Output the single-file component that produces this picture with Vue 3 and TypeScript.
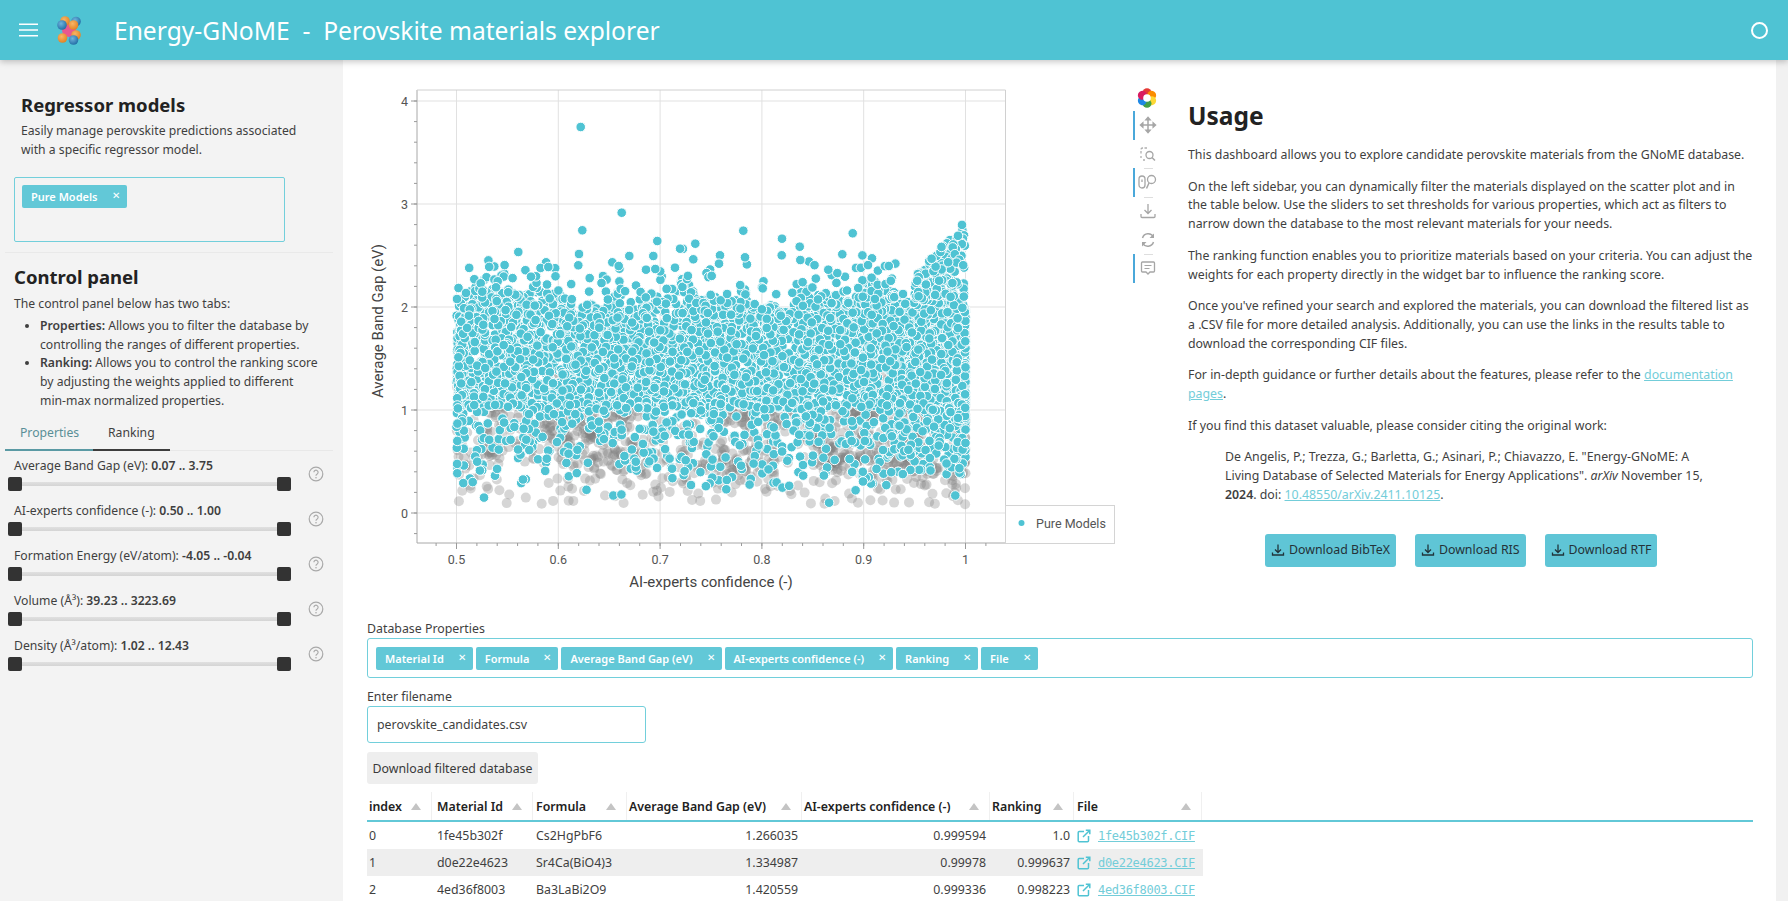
<script setup lang="ts">
import { computed } from "vue";

type Pt = { x: number; y: number };

let seed = 20241115;
function rnd(): number {
  seed = (seed * 1664525 + 1013904223) >>> 0;
  return seed / 4294967296;
}
function gauss(): number {
  return (rnd() + rnd() + rnd() + rnd() - 2) * 1.0;
}
const X0 = 456.5;
const XK = 1018;
const Y0 = 513;
const YK = 103;
const toX = (v: number) => +(X0 + (v - 0.5) * XK - 367).toFixed(1);
const toY = (v: number) => +(Y0 - v * YK - 80).toFixed(1);

function confidence(): number {
  const u = rnd();
  if (rnd() < 0.16) return 1 - Math.pow(u, 2.2) * 0.1;
  if (rnd() < 0.03) return 0.5 + u * 0.008;
  return 0.5 + 0.5 * Math.pow(u, 0.97);
}
function topEdge(c: number): number {
  return 2.1 + 0.07 * Math.sin(c * 37) + 0.07 * Math.sin(c * 97 + 1) + 0.05 * Math.sin(c * 211);
}

const grayPts = computed<Pt[]>(() => {
  const out: Pt[] = [];
  for (let i = 0; i < 800; i++) {
    const y = 0.8 + gauss() * 0.55;
    if (y < 0.08 || y > 1.6) continue;
    out.push({ x: toX(confidence()), y: toY(y) });
  }
  // dark clusters seen through gaps
  for (let i = 0; i < 40; i++) {
    const cx = 0.52 + rnd() * 0.46;
    const cy = 0.4 + rnd() * 0.75;
    for (let k = 0; k < 10; k++) {
      out.push({ x: toX(cx + (rnd() - 0.5) * 0.024), y: toY(cy + (rnd() - 0.5) * 0.2) });
    }
  }
  for (let i = 0; i < 60; i++) {
    out.push({ x: toX(0.505 + rnd() * 0.495), y: toY(0.08 + rnd() * 0.45) });
  }
  return out;
});

const tealPts = computed<Pt[]>(() => {
  const out: Pt[] = [];
  for (let i = 0; i < 4400; i++) {
    const c = confidence();
    const t = topEdge(c);
    const y = 1.02 + Math.pow(rnd(), 1.05) * (t - 1.02);
    out.push({ x: toX(c), y: toY(y) });
  }
  for (let i = 0; i < 640; i++) {
    const y = 0.22 + Math.pow(rnd(), 0.6) * 0.85;
    out.push({ x: toX(confidence()), y: toY(y) });
  }
  for (let i = 0; i < 120; i++) {
    const c = 0.5 + rnd() * 0.5;
    out.push({ x: toX(c), y: toY(topEdge(c) + Math.pow(rnd(), 1.4) * 0.3) });
  }
  for (let i = 0; i < 130; i++) {
    const t = rnd();
    out.push({ x: toX(0.95 + 0.05 * t), y: toY(2.05 + rnd() * (0.25 + t * 0.55)) });
  }
  const fixed = [
    [662, 141], [785, 398], [667, 451], [475, 516], [657, 522], [655, 556], [757, 547], [776, 558],
    [808, 528], [1150, 452], [1155, 532], [1266, 476], [1265, 526], [1319, 500], [1321, 540],
    [1478, 460], [1447, 523], [1006, 491], [892, 483], [880, 528], [1000, 538], [1080, 526],
    [1077, 551], [858, 569], [886, 567], [945, 563], [565, 561], [513, 590], [362, 610], [413, 604],
    [408, 622], [367, 635], [318, 639], [291, 657],
  ];
  for (const [a, b] of fixed) out.push({ x: +(360 + a / 3 - 367).toFixed(1), y: +(80 + b / 3 - 80).toFixed(1) });
  const low = [[0.527, 0.15], [0.654, 0.17], [0.662, 0.18], [0.866, 0.1], [0.99, 0.17], [0.892, 0.22], [0.745, 0.26], [0.765, 0.23]];
  for (const [a, b] of low) out.push({ x: toX(a), y: toY(b) });
  return out;
});

const xTicks = [0.5, 0.6, 0.7, 0.8, 0.9, 1];
const yTicks = [0, 1, 2, 3, 4];
const xMinor = computed<number[]>(() => {
  const r: number[] = [];
  for (let i = 0; i < 30; i++) r.push(toX(0.46 + i * 0.02));
  return r.filter((v) => v > 50 && v < 638);
});
const yMinor = computed<number[]>(() => {
  const r: number[] = [];
  for (let i = -1; i < 21; i++) r.push(toY(i * 0.2));
  return r.filter((v) => v > 10 && v < 462);
});

const regressorTags = ["Pure Models"];
const sliders = [
  { label: "Average Band Gap (eV):", value: "0.07 .. 3.75" },
  { label: "AI-experts confidence (-):", value: "0.50 .. 1.00" },
  { label: "Formation Energy (eV/atom):", value: "-4.05 .. -0.04" },
  { label: "Volume (Å³):", value: "39.23 .. 3223.69" },
  { label: "Density (Å³/atom):", value: "1.02 .. 12.43" },
];
const propTags = ["Material Id", "Formula", "Average Band Gap (eV)", "AI-experts confidence (-)", "Ranking", "File"];
const columns = [
  { name: "index", cls: "c0" },
  { name: "Material Id", cls: "c1" },
  { name: "Formula", cls: "c2" },
  { name: "Average Band Gap (eV)", cls: "c3" },
  { name: "AI-experts confidence (-)", cls: "c4" },
  { name: "Ranking", cls: "c5" },
  { name: "File", cls: "c6" },
];
const rows = [
  { i: 0, id: "1fe45b302f", f: "Cs2HgPbF6", gap: "1.266035", conf: "0.999594", rank: "1.0" },
  { i: 1, id: "d0e22e4623", f: "Sr4Ca(BiO4)3", gap: "1.334987", conf: "0.99978", rank: "0.999637" },
  { i: 2, id: "4ed36f8003", f: "Ba3LaBi2O9", gap: "1.420559", conf: "0.999336", rank: "0.998223" },
];
const citeButtons = ["Download BibTeX", "Download RIS", "Download RTF"];
const wheel = [
  ["#e53935", 0], ["#fb8c00", 60], ["#fdd835", 120], ["#43a047", 180], ["#1e88e5", 240], ["#d81b60", 300],
] as const;
const orange = [[18.5, 10], [21, 20], [7.5, 23]];
</script>

<template>
  <div class="page">
    <header class="topbar">
      <svg class="menu" width="20" height="14" viewBox="0 0 20 14">
        <path d="M0 1.2H19M0 7H19M0 12.8H19" stroke="#fff" stroke-width="1.6" fill="none" />
      </svg>
      <svg class="logo" width="30" height="30" viewBox="0 0 30 30">
        <defs>
          <radialGradient id="ball-o" cx="40%" cy="35%" r="70%">
            <stop offset="0" stop-color="#f8b566" />
            <stop offset="1" stop-color="#e2801f" />
          </radialGradient>
          <radialGradient id="ball-b" cx="40%" cy="35%" r="70%">
            <stop offset="0" stop-color="#6fb3dc" />
            <stop offset="1" stop-color="#1f6aa3" />
          </radialGradient>
        </defs>
        <circle cx="14" cy="15" r="7" fill="#e8588f" />
        <circle cx="10" cy="6" r="4.800" fill="url(#ball-o)" />
        <circle cx="21" cy="6.500" r="4.800" fill="url(#ball-b)" />
        <circle cx="7" cy="10" r="4.800" fill="url(#ball-b)" />
        <circle v-for="(p, i) in orange" :key="'o' + i" :cx="p[0]" :cy="p[1]" r="4.800" fill="url(#ball-o)" />
        <circle cx="18.500" cy="25" r="4.800" fill="url(#ball-b)" />
      </svg>
      <h1 class="title">Energy-GNoME&nbsp; -&nbsp; Perovskite materials explorer</h1>
      <span class="status"></span>
    </header>

    <div class="body">
      <aside class="sidebar">
        <section class="side-top">
          <h2>Regressor models</h2>
          <p>Easily manage perovskite predictions associated with a specific regressor model.</p>
          <div class="multi">
            <span v-for="t in regressorTags" :key="t" class="tag">{{ t }}<i>✕</i></span>
          </div>
        </section>
        <section class="side-panel">
          <h2>Control panel</h2>
          <p>The control panel below has two tabs:</p>
          <ul>
            <li><b>Properties:</b> Allows you to filter the database by controlling the ranges of different properties.</li>
            <li><b>Ranking:</b> Allows you to control the ranking score by adjusting the weights applied to different <span class="nowrap">min-max</span> normalized properties.</li>
          </ul>
        </section>
        <nav class="tabs">
          <span class="tab active">Properties</span>
          <span class="tab">Ranking</span>
        </nav>
        <div class="sliders">
          <div v-for="s in sliders" :key="s.label" class="slider">
            <div class="slider-main">
              <div class="slider-label">{{ s.label }} <b>{{ s.value }}</b></div>
              <div class="track"><span class="knob"></span><span class="knob"></span></div>
            </div>
            <svg class="help" width="16" height="16" viewBox="0 0 16 16">
              <circle cx="8" cy="8" r="6.800" fill="none" stroke="#a9a9a9" stroke-width="1.200" />
              <path d="M5.900 6.300a2.100 2.100 0 1 1 3.300 1.700c-.8.500-1.200.9-1.200 1.800" fill="none" stroke="#a9a9a9" stroke-width="1.200" />
              <circle cx="8" cy="11.700" r=".8" fill="#a9a9a9" />
            </svg>
          </div>
        </div>
      </aside>

      <main class="main">
        <div class="top-row">
          <div class="plot-wrap">
            <svg class="plot" width="760" height="520" viewBox="0 0 760 520">
              <g class="grid">
                <line v-for="t in xTicks" :key="'gx' + t" :x1="toX(t)" :x2="toX(t)" y1="10" y2="463" />
                <line v-for="t in yTicks" :key="'gy' + t" x1="50" x2="638.500" :y1="toY(t)" :y2="toY(t)" />
              </g>
              <circle v-for="(p, i) in grayPts" :key="'g' + i" :cx="p.x" :cy="p.y" r="5" fill="#7f7f7f" fill-opacity=".32" />
              <circle v-for="(p, i) in tealPts" :key="'t' + i" :cx="p.x" :cy="p.y" r="4.800" fill="#4fc3d3" stroke="#fff" stroke-width="1" />
              <path d="M50 10V463H638.500" fill="none" stroke="#a8a8a8" stroke-width="1" />
              <path d="M50 10H638.500V463" fill="none" stroke="#d0d0d0" stroke-width="1" />
              <g class="ticks">
                <line v-for="t in xTicks" :key="'tx' + t" :x1="toX(t)" :x2="toX(t)" y1="463" y2="469" />
                <line v-for="t in yTicks" :key="'ty' + t" x1="44" x2="50" :y1="toY(t)" :y2="toY(t)" />
                <line v-for="v in xMinor" :key="'mx' + v" :x1="v" :x2="v" y1="463" y2="466" />
                <line v-for="v in yMinor" :key="'my' + v" x1="47" x2="50" :y1="v" :y2="v" />
              </g>
              <text v-for="t in xTicks" :key="'lx' + t" :x="toX(t)" y="484" class="tick-label" text-anchor="middle">{{ t }}</text>
              <text v-for="t in yTicks" :key="'ly' + t" x="41" :y="toY(t) + 4.500" class="tick-label" text-anchor="end">{{ t }}</text>
              <text x="344" y="507" class="axis-label" text-anchor="middle">AI-experts confidence (-)</text>
              <text class="axis-label" text-anchor="middle" transform="translate(16 241) rotate(-90)">Average Band Gap (eV)</text>
              <rect x="638.500" y="425.500" width="109" height="38" fill="#fff" stroke="#d4d4d4" />
              <circle cx="654.500" cy="443" r="3" fill="#4fc3d3" />
              <text x="669" y="448" class="legend-label">Pure Models</text>
            </svg>

            <div class="toolbar">
              <svg class="wheel" width="20" height="20" viewBox="0 0 20 20">
                <g v-for="w in wheel" :key="w[1]" :transform="`rotate(${w[1]} 10 10)`">
                  <ellipse cx="10" cy="4.500" rx="4.500" ry="4.300" :fill="w[0]" />
                </g>
                <circle cx="10" cy="10" r="3.800" fill="#fff" />
              </svg>
              <div class="tool on">
                <svg width="18" height="18" viewBox="0 0 18 18"><path d="M9 1.500V16.500M1.500 9H16.500M9 1.500 7 3.800H11ZM9 16.500 7 14.200H11ZM1.500 9 3.800 7V11ZM16.500 9 14.200 7V11Z" fill="#a6a6a6" stroke="#a6a6a6" stroke-width="1.500" /></svg>
              </div>
              <div class="tool">
                <svg width="18" height="18" viewBox="0 0 18 18"><path d="M8 3H3.500A1.500 1.500 0 0 0 2 4.500V9M2 11V13M4 15H6" fill="none" stroke="#b0b0b0" stroke-width="1.300" stroke-dasharray="2.500 1.500" /><circle cx="10.500" cy="10" r="3.500" fill="none" stroke="#a6a6a6" stroke-width="1.300" /><path d="M13 12.500 16 15.500" stroke="#a6a6a6" stroke-width="1.500" /></svg>
              </div>
              <hr class="tool-sep" />
              <div class="tool on">
                <svg width="20" height="18" viewBox="0 0 20 18"><rect x="1" y="3" width="6" height="12" rx="3" fill="none" stroke="#a6a6a6" stroke-width="1.300" /><path d="M4 6.500V9" stroke="#a6a6a6" stroke-width="1.300" /><circle cx="13.500" cy="6.500" r="4" fill="none" stroke="#a6a6a6" stroke-width="1.300" /><path d="M11 10 8.500 15.500" stroke="#a6a6a6" stroke-width="1.500" /></svg>
              </div>
              <hr class="tool-sep" />
              <div class="tool">
                <svg width="18" height="18" viewBox="0 0 18 18"><path d="M9 2V11M5.500 8 9 11.500 12.500 8M2 12V14.500A1 1 0 0 0 3 15.500H15A1 1 0 0 0 16 14.500V12" fill="none" stroke="#a6a6a6" stroke-width="1.300" /></svg>
              </div>
              <div class="tool">
                <svg width="18" height="18" viewBox="0 0 18 18"><path d="M14.500 6A6 6 0 0 0 3.500 7M3.500 12A6 6 0 0 0 14.500 11" fill="none" stroke="#a6a6a6" stroke-width="1.500" /><path d="M15 2.500V7H10.500ZM3 15.500V11H7.500Z" fill="#a6a6a6" /></svg>
              </div>
              <hr class="tool-sep" />
              <div class="tool on">
                <svg width="18" height="18" viewBox="0 0 18 18"><path d="M3.500 3H14.500A1 1 0 0 1 15.500 4V12A1 1 0 0 1 14.500 13H11L9 15 7 13H3.500A1 1 0 0 1 2.500 12V4A1 1 0 0 1 3.500 3Z" fill="none" stroke="#a6a6a6" stroke-width="1.300" /><path d="M5.500 6.500H12.500M5.500 9.500H10.500" stroke="#a6a6a6" stroke-width="1.200" /></svg>
              </div>
            </div>
          </div>

          <article class="usage">
            <h2>Usage</h2>
            <p>This dashboard allows you to explore candidate perovskite materials from the GNoME database.</p>
            <p>On the left sidebar, you can dynamically filter the materials displayed on the scatter plot and in the table below. Use the sliders to set thresholds for various properties, which act as filters to narrow down the database to the most relevant materials for your needs.</p>
            <p>The ranking function enables you to prioritize materials based on your criteria. You can adjust the weights for each property directly in the widget bar to influence the ranking score.</p>
            <p>Once you've refined your search and explored the materials, you can download the filtered list as a .CSV file for more detailed analysis. Additionally, you can use the links in the results table to download the corresponding CIF files.</p>
            <p>For in-depth guidance or further details about the features, please refer to the <a href="#">documentation pages</a>.</p>
            <p>If you find this dataset valuable, please consider citing the original work:</p>
            <blockquote>De Angelis, P.; Trezza, G.; Barletta, G.; Asinari, P.; Chiavazzo, E. "Energy-GNoME: A Living Database of Selected Materials for Energy Applications". <em>arXiv</em> November 15, <b>2024</b>. doi: <a href="#">10.48550/arXiv.2411.10125</a>.</blockquote>
            <div class="cite-row">
              <button v-for="b in citeButtons" :key="b" class="cite">
                <svg width="14" height="14" viewBox="0 0 14 14"><path d="M7 1.500V9M4 6.500 7 9.500 10 6.500M1.500 9.500V12H12.500V9.500" fill="none" stroke="#20343a" stroke-width="1.300" /></svg>
                {{ b }}
              </button>
            </div>
          </article>
        </div>

        <section class="db">
          <label class="field-label">Database Properties</label>
          <div class="multi wide">
            <span v-for="t in propTags" :key="t" class="tag">{{ t }}<i>✕</i></span>
          </div>
          <label class="field-label second">Enter filename</label>
          <div class="input">perovskite_candidates.csv</div>
          <button class="dl">Download filtered database</button>

          <div class="table">
            <div class="thead">
              <div v-for="c in columns" :key="c.name" class="th" :class="c.cls">
                <span>{{ c.name }}</span>
                <svg width="10" height="7" viewBox="0 0 10 7"><path d="M5 0 10 7H0Z" fill="#c4c4c4" /></svg>
              </div>
            </div>
            <div v-for="r in rows" :key="r.i" class="tr" :class="{ odd: r.i === 1 }">
              <div class="td c0">{{ r.i }}</div>
              <div class="td c1">{{ r.id }}</div>
              <div class="td c2">{{ r.f }}</div>
              <div class="td c3 num">{{ r.gap }}</div>
              <div class="td c4 num">{{ r.conf }}</div>
              <div class="td c5 num">{{ r.rank }}</div>
              <div class="td c6 file">
                <svg width="14" height="14" viewBox="0 0 14 14"><path d="M7 2.500H2.200A1 1 0 0 0 1.200 3.500V11.800A1 1 0 0 0 2.200 12.800H10.500A1 1 0 0 0 11.500 11.800V7M6 8 12.800 1.200M8.800 1.200H12.800V5.200" fill="none" stroke="#4fc3d3" stroke-width="1.500" /></svg>
                <a href="#">{{ r.id }}.CIF</a>
              </div>
            </div>
          </div>
        </section>
      </main>
      <div class="scrollbar"></div>
    </div>
  </div>
</template>

<style>
html, body { margin: 0; height: 100%; overflow: hidden; background: #fff; }
</style>

<style scoped>
.page {
  width: 1788px;
  height: 901px;
  overflow: hidden;
  display: flex;
  flex-direction: column;
  font-family: "Noto Sans", "Open Sans", sans-serif;
  color: #3f3f3f;
  font-size: 12.35px;
}
.topbar {
  height: 60px;
  flex: none;
  background: #4fc3d3;
  display: flex;
  align-items: center;
  padding: 0 20px 0 19px;
  box-shadow: 0 2px 6px rgba(0, 0, 0, 0.22);
  position: relative;
  z-index: 2;
}
.logo { margin-left: 16px; }
.title {
  margin: 0 0 0 29px;
  color: #fff;
  font-size: 24.6px;
  font-weight: 400;
  white-space: nowrap;
}
.status {
  margin-left: auto;
  width: 13px;
  height: 13px;
  border: 2.5px solid #fff;
  border-radius: 50%;
}
.body { flex: 1; display: flex; min-height: 0; }
.sidebar {
  width: 343px;
  flex: none;
  background: #f3f3f3;
  box-sizing: border-box;
  padding-top: 32px;
  font-size: 12.2px;
}
.side-top { padding: 0 0 0 14px; }
.side-top h2 { margin: 0 0 0 7px; font-size: 18.5px; line-height: 26px; color: #222; font-weight: 700; }
.side-top p { margin: 3px 20px 0 7px; line-height: 19px; }
.multi {
  border: 1px solid #72cfdb;
  border-radius: 2px;
  box-sizing: border-box;
  width: 271px;
  height: 65px;
  margin-top: 18px;
  padding: 7px;
  display: flex;
  gap: 3px;
  align-items: flex-start;
}
.multi.wide {
  width: 1386px;
  height: 40px;
  margin-top: 0;
  padding: 8px;
  border-radius: 3px;
}
.tag {
  height: 23px;
  background: #62c8d7;
  color: #fff;
  font-weight: 600;
  font-size: 11px;
  display: inline-flex;
  align-items: center;
  padding: 0 0 0 9px;
  border-radius: 2px;
  white-space: nowrap;
}
.tag i {
  font-style: normal;
  font-weight: 400;
  font-size: 10px;
  margin: -3px 7px 0 14px;
}
.side-panel {
  margin: 10px 10px 0 5px;
  border-top: 1px solid #e9e9e9;
  padding: 10px 0 0 9px;
}
.side-panel h2 { margin: 0; font-size: 18.5px; line-height: 28px; color: #222; font-weight: 700; }
.side-panel p { margin: 3px 0 0; line-height: 19px; }
.side-panel ul { margin: 4px 0 0; padding: 0 0 0 26px; }
.side-panel li { line-height: 18.700px; }
.side-panel b { font-weight: 600; }
.nowrap { white-space: nowrap; }
.tabs {
  margin: 2px 10px 0 5px;
  height: 38px;
  display: flex;
  border-bottom: 1px solid #e8e8e8;
  box-sizing: border-box;
}
.tab {
  box-sizing: border-box;
  height: 38px;
  padding: 10px 15px 0;
  border-bottom: 2px solid #3c3c3c;
  width: 77px;
  white-space: nowrap;
  line-height: 19px;
}
.tab.active {
  width: 88px;
  color: #5a8f97;
  border-bottom-color: #5a9aa4;
}
.sliders { padding: 3px 0 0 8px; }
.slider {
  height: 45px;
  display: flex;
  align-items: center;
  width: 318px;
}
.slider-main { width: 283px; }
.slider-label { margin-left: 6px; line-height: 20px; white-space: nowrap; margin-top: -5px; }
.slider-label b { font-weight: 600; }
.track {
  margin-top: 1px;
  height: 14px;
  display: flex;
  justify-content: space-between;
  align-items: center;
  background: linear-gradient(#e0e0e0, #d4d4d4) center / 100% 4px no-repeat;
}
.knob { width: 14px; height: 14px; background: #333; border-radius: 2px; }
.help { margin: -4px 0 0 17px; }
.main {
  flex: 1;
  min-width: 0;
  padding: 20px 0 0 24px;
  box-sizing: border-box;
  overflow: hidden;
}
.top-row { display: flex; height: 539px; }
.plot-wrap { display: flex; width: 796px; flex: none; }
.plot { display: block; flex: none; }
.grid line { stroke: #e1e1e1; stroke-width: 1; }
.ticks line { stroke: #9a9a9a; stroke-width: 1; }
.tick-label { font: 12.5px Roboto, sans-serif; fill: #555; }
.axis-label { font: 15px Roboto, sans-serif; fill: #444; }
.legend-label { font: 12.5px Roboto, sans-serif; fill: #555; }
.toolbar {
  width: 36px;
  flex: none;
  display: flex;
  flex-direction: column;
  align-items: center;
  padding-top: 8px;
  margin-left: 2px;
}
.wheel { margin-bottom: 3px; }
.tool {
  width: 28px;
  height: 28.6px;
  flex: none;
  display: flex;
  align-items: center;
  justify-content: center;
  box-sizing: border-box;
  border-left: 2px solid transparent;
}
.tool.on { border-left-color: #4aa8da; }
.tool-sep {
  width: 9px;
  height: 1px;
  margin: 0 0 -1px 2px;
  border: none;
  background: #dedede;
  flex: none;
}
.usage {
  width: 590px;
  flex: none;
  box-sizing: border-box;
  padding: 0 0 0 25px;
  line-height: 18.700px;
}
.usage h2 { margin: 21px 0 15px; font-size: 24.5px; line-height: 30px; color: #222; font-weight: 700; }
.usage p { margin: 0 0 13px; }
.usage a { color: #73cdd9; }
.usage blockquote { margin: 0 36px 0 37px; }
.usage b { font-weight: 600; }
.cite-row { display: flex; gap: 19px; margin: 29px 0 0 77px; }
.cite {
  height: 33px;
  padding: 0 6px;
  background: #5fc5d6;
  color: #243238;
  border: none;
  border-radius: 3px;
  font: inherit;
  display: inline-flex;
  align-items: center;
  gap: 4px;
  white-space: nowrap;
}
.db { padding-top: 0; }
.field-label { display: block; line-height: 19px; margin-bottom: 0; }
.field-label.second { margin-top: 9px; margin-bottom: 0; }
.input {
  width: 279px;
  height: 37px;
  box-sizing: border-box;
  border: 1px solid #72cfdb;
  border-radius: 3px;
  padding: 0 9px;
  display: flex;
  align-items: center;
}
.dl {
  display: block;
  margin-top: 9px;
  width: 171px;
  height: 32px;
  background: #eeeeee;
  border: none;
  border-radius: 3px;
  color: #3a3a3a;
  font: inherit;
  white-space: nowrap;
  padding: 0;
}
.table { margin-top: 8px; width: 1386px; }
.thead {
  display: flex;
  height: 28px;
  border-bottom: 2px solid #62c8d7;
  align-items: center;
  box-sizing: content-box;
}
.th {
  display: flex;
  align-items: center;
  justify-content: space-between;
  box-sizing: border-box;
  padding: 0 10px 0 2px;
  height: 28px;
  font-weight: 600;
  color: #222;
  border-right: 1px solid #f0f0f0;
  white-space: nowrap;
}
.tr { display: flex; height: 27px; align-items: center; }
.tr.odd { background: #eeeeee; width: 836px; }
.td { box-sizing: border-box; padding: 0 4px 0 2px; white-space: nowrap; }
.c0 { width: 65px; }
.c1 { width: 101px; padding-left: 5px; }
.c2 { width: 94px; padding-left: 3px; }
.c3 { width: 175px; }
.c4 { width: 188px; }
.c5 { width: 84px; }
.c6 { width: 128px; padding-left: 3px; }
.num { text-align: right; }
.file { display: flex; align-items: center; gap: 7px; }
.file a { font: 12px "DejaVu Sans Mono", "Liberation Mono", monospace; letter-spacing: -0.3px; color: #73cdd9; }
.scrollbar { width: 12px; flex: none; background: #f1f1f1; }
</style>
